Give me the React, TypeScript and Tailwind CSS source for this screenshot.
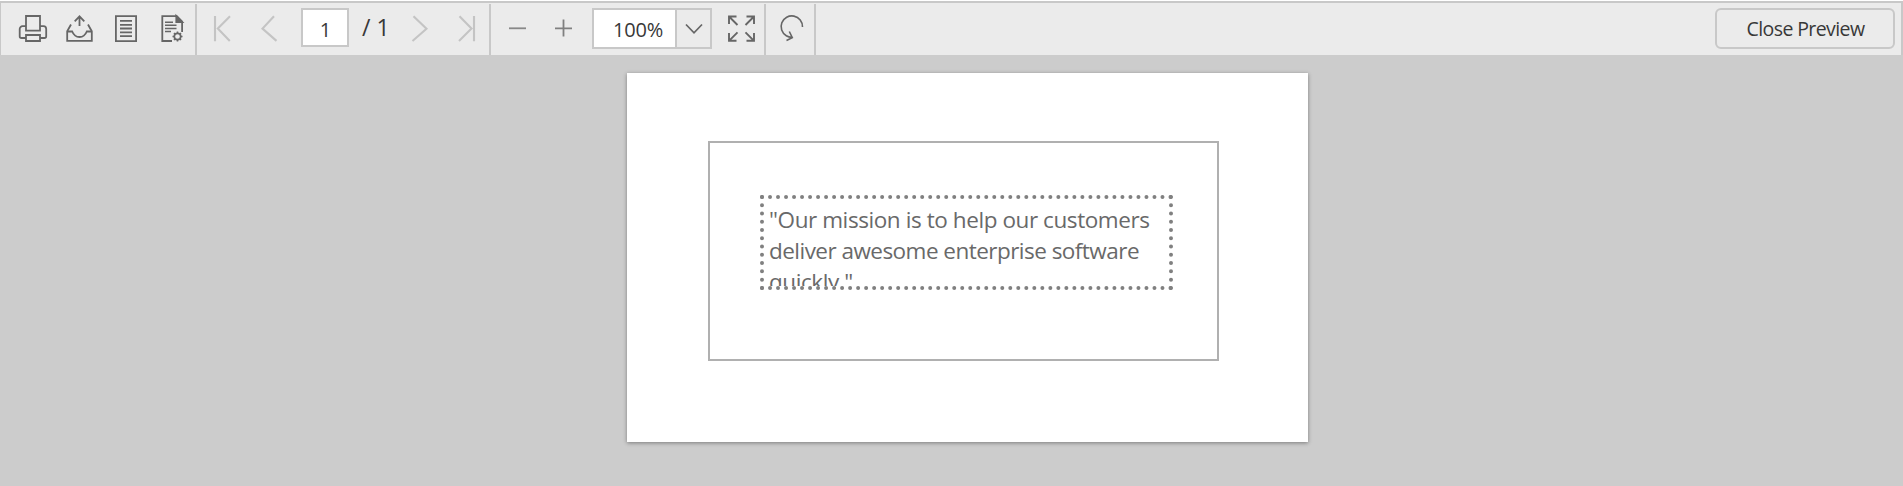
import type { ReactNode } from "react";

type IconProps = {
  x: number;
  w: number;
  label: string;
  tone?: string;
  width?: number;
  children: ReactNode;
};

function IconButton({ x, w, label, tone = "#666666", width = 1.8, children }: IconProps) {
  return (
    <button aria-label={label} className="block shrink-0">
      <svg
        width={w}
        height={52}
        viewBox={`${x} 3 ${w} 52`}
        fill="none"
        stroke={tone}
        strokeWidth={width}
        className="block"
      >
        {children}
      </svg>
    </button>
  );
}

function Separator() {
  return <div className="mt-px h-[51px] w-[2px] shrink-0 bg-[#c8c8c8]" />;
}

function Toolbar() {
  return (
    <div className="flex h-[54px] shrink-0 border-t-2 border-r-2 border-l border-[#c8c8c8] bg-[#ebebeb] pl-[9px]">
      <IconButton x={10} w={46} label="Print">
        <path d="M26 26.500V16h14v10.500M26 26.500v4.200h14v-4.200" />
        <path d="M26 38h-4.500a1.800 1.800 0 0 1-1.800-1.800V29a2.800 2.800 0 0 1 2.800-2.800H26M40 26.200h3.500A2.800 2.800 0 0 1 46.200 29v7.200a1.800 1.800 0 0 1-1.800 1.800H40" />
        <path d="M26 35h14v6H26z" />
      </IconButton>
      <IconButton x={56} w={47} label="Export">
        <path d="M79.500 26V16.500M74.700 21.300l4.800-4.900 4.800 4.900" />
        <path d="M71 24.500l-3.800 6.800v9.500h24.600v-9.500L88 24.500" />
        <path d="M67.200 31.500h5c1.300 3.200 3.800 5.500 7.300 5.500s6-2.300 7.300-5.500h5" />
      </IconButton>
      <IconButton x={103} w={46} label="Page layout">
        <path d="M115.900 16.200h20.200v25h-20.200z" />
        <path d="M120 20.800h12M120 24.800h12M120 28.500h12M120 32.300h12M120 36.200h12" />
      </IconButton>
      <IconButton x={149} w={46} label="Page setup">
        <path d="M172 41h-9.700V16.200h14.500l5.300 5.300V32" />
        <path d="M176.300 16v6h6z" fill="#666666" />
        <path d="M165 22.300h8M165 25.300h11.500M165 28.400h11.500M165 31.400h6" strokeWidth="1.5" />
        <circle cx="177.500" cy="36.500" r="3.200" strokeWidth="1.700" />
        <path
          d="M177.500 31.500v2M177.500 39.500v2M172.500 36.500h2M180.500 36.500h2M174 33l1.400 1.400M179.600 38.600l1.400 1.400M174 40l1.400-1.400M179.600 34.400l1.400-1.400"
          strokeWidth="1.600"
        />
      </IconButton>
      <Separator />
      <IconButton x={197} w={50} label="First page" tone="#c4c4c4" width={2.1}>
        <path d="M215 16v25.300M230 16.300L217.800 28.600l12 12.300" />
      </IconButton>
      <IconButton x={247} w={54} label="Previous page" tone="#c4c4c4" width={2.1}>
        <path d="M274 16.300L262.500 28.600l14 12.300" />
      </IconButton>
      <div className="mt-[5px] h-[39px] w-[48px] shrink-0 border-2 border-[#c8c8c8] bg-white pl-px text-center text-[20px] leading-[39px] text-[#383838]">
        1
      </div>
      <div className="w-[49px] shrink-0 pl-[13px] text-[23px] leading-[49px] whitespace-nowrap text-[#383838]">
        / 1
      </div>
      <IconButton x={398} w={46} label="Next page" tone="#c4c4c4" width={2.1}>
        <path d="M413.500 16.300L426.500 28.800l-14 12.200" />
      </IconButton>
      <IconButton x={444} w={45} label="Last page" tone="#c4c4c4" width={2.1}>
        <path d="M474 16v25.300M459.500 16.300L471.500 28.600l-12.500 12.300" />
      </IconButton>
      <Separator />
      <IconButton x={491} w={50} label="Zoom out" tone="#888888">
        <path d="M509 28.300h17" />
      </IconButton>
      <IconButton x={541} w={51} label="Zoom in" tone="#808080">
        <path d="M555 28.300h17M563.500 19.500v17" />
      </IconButton>
      <div className="mt-[5px] flex h-[41px] w-[120px] shrink-0 border-2 border-[#c8c8c8]">
        <div className="w-[81px] bg-white pr-[12px] text-right text-[20px] leading-[39px] tracking-[-0.200px] text-[#383838]">
          100%
        </div>
        <div className="w-[35px] border-l-2 border-[#c8c8c8]">
          <svg width="33" height="37" viewBox="677 10 33 37" fill="none" stroke="#666666" strokeWidth="1.700">
            <path d="M686 24.500l8 8.300 8-8.300" />
          </svg>
        </div>
      </div>
      <IconButton x={712} w={52} label="Full screen" width={1.9}>
        <path d="M729 24v-7.500h7.500M729 16.500l8.500 8.500M746.500 16.500h7.500V24M754 16.500l-8.500 8.500M729 33v7.800h7.500M729 40.800l8.500-8.500M746.500 40.800h7.500V33M754 40.800l-8.500-8.500" />
      </IconButton>
      <Separator />
      <IconButton x={766} w={48} label="Rotate" width={1.6}>
        <path d="M802.500 27a10.700 10.700 0 1 0-16.200 8.800q2.200 1.300 5.800 1.700M789.300 31.500l3 6.200-5.800 2.800" />
      </IconButton>
      <Separator />
      <button className="mt-[5px] mr-[6px] ml-auto h-[41px] w-[180px] rounded-[6px] border-2 border-[#c8c8c8] pl-px text-[19.500px] leading-[37px] tracking-[-0.600px] text-[#383838]">
        Close Preview
      </button>
    </div>
  );
}

export default function App() {
  return (
    <div className="flex h-[486px] w-[1903px] flex-col overflow-hidden bg-[#cccccc] font-['Open_Sans','Noto_Sans',sans-serif]">
      <div className="h-px shrink-0 bg-white" />
      <Toolbar />
      <div className="flex grow pt-[18px] pl-[627px]">
        <div className="h-[369px] w-[681px] bg-white pt-[68px] pl-[81px] shadow-[0_1px_4px_rgba(0,0,0,0.4)]">
          <div className="h-[220px] w-[511px] border-2 border-[#b0b0b0] pt-[52px] pl-[50px]">
            <div className="h-[95px] w-[413px] overflow-hidden border-4 border-dotted border-[#808080] pt-[5px] pl-[5px] text-[22.500px] leading-[31px] tracking-[-0.420px] whitespace-nowrap text-[#696969]">
              <div>"Our mission is to help our customers</div>
              <div className="tracking-[-0.530px]">deliver awesome enterprise software</div>
              <div>quickly."</div>
            </div>
          </div>
        </div>
      </div>
    </div>
  );
}
